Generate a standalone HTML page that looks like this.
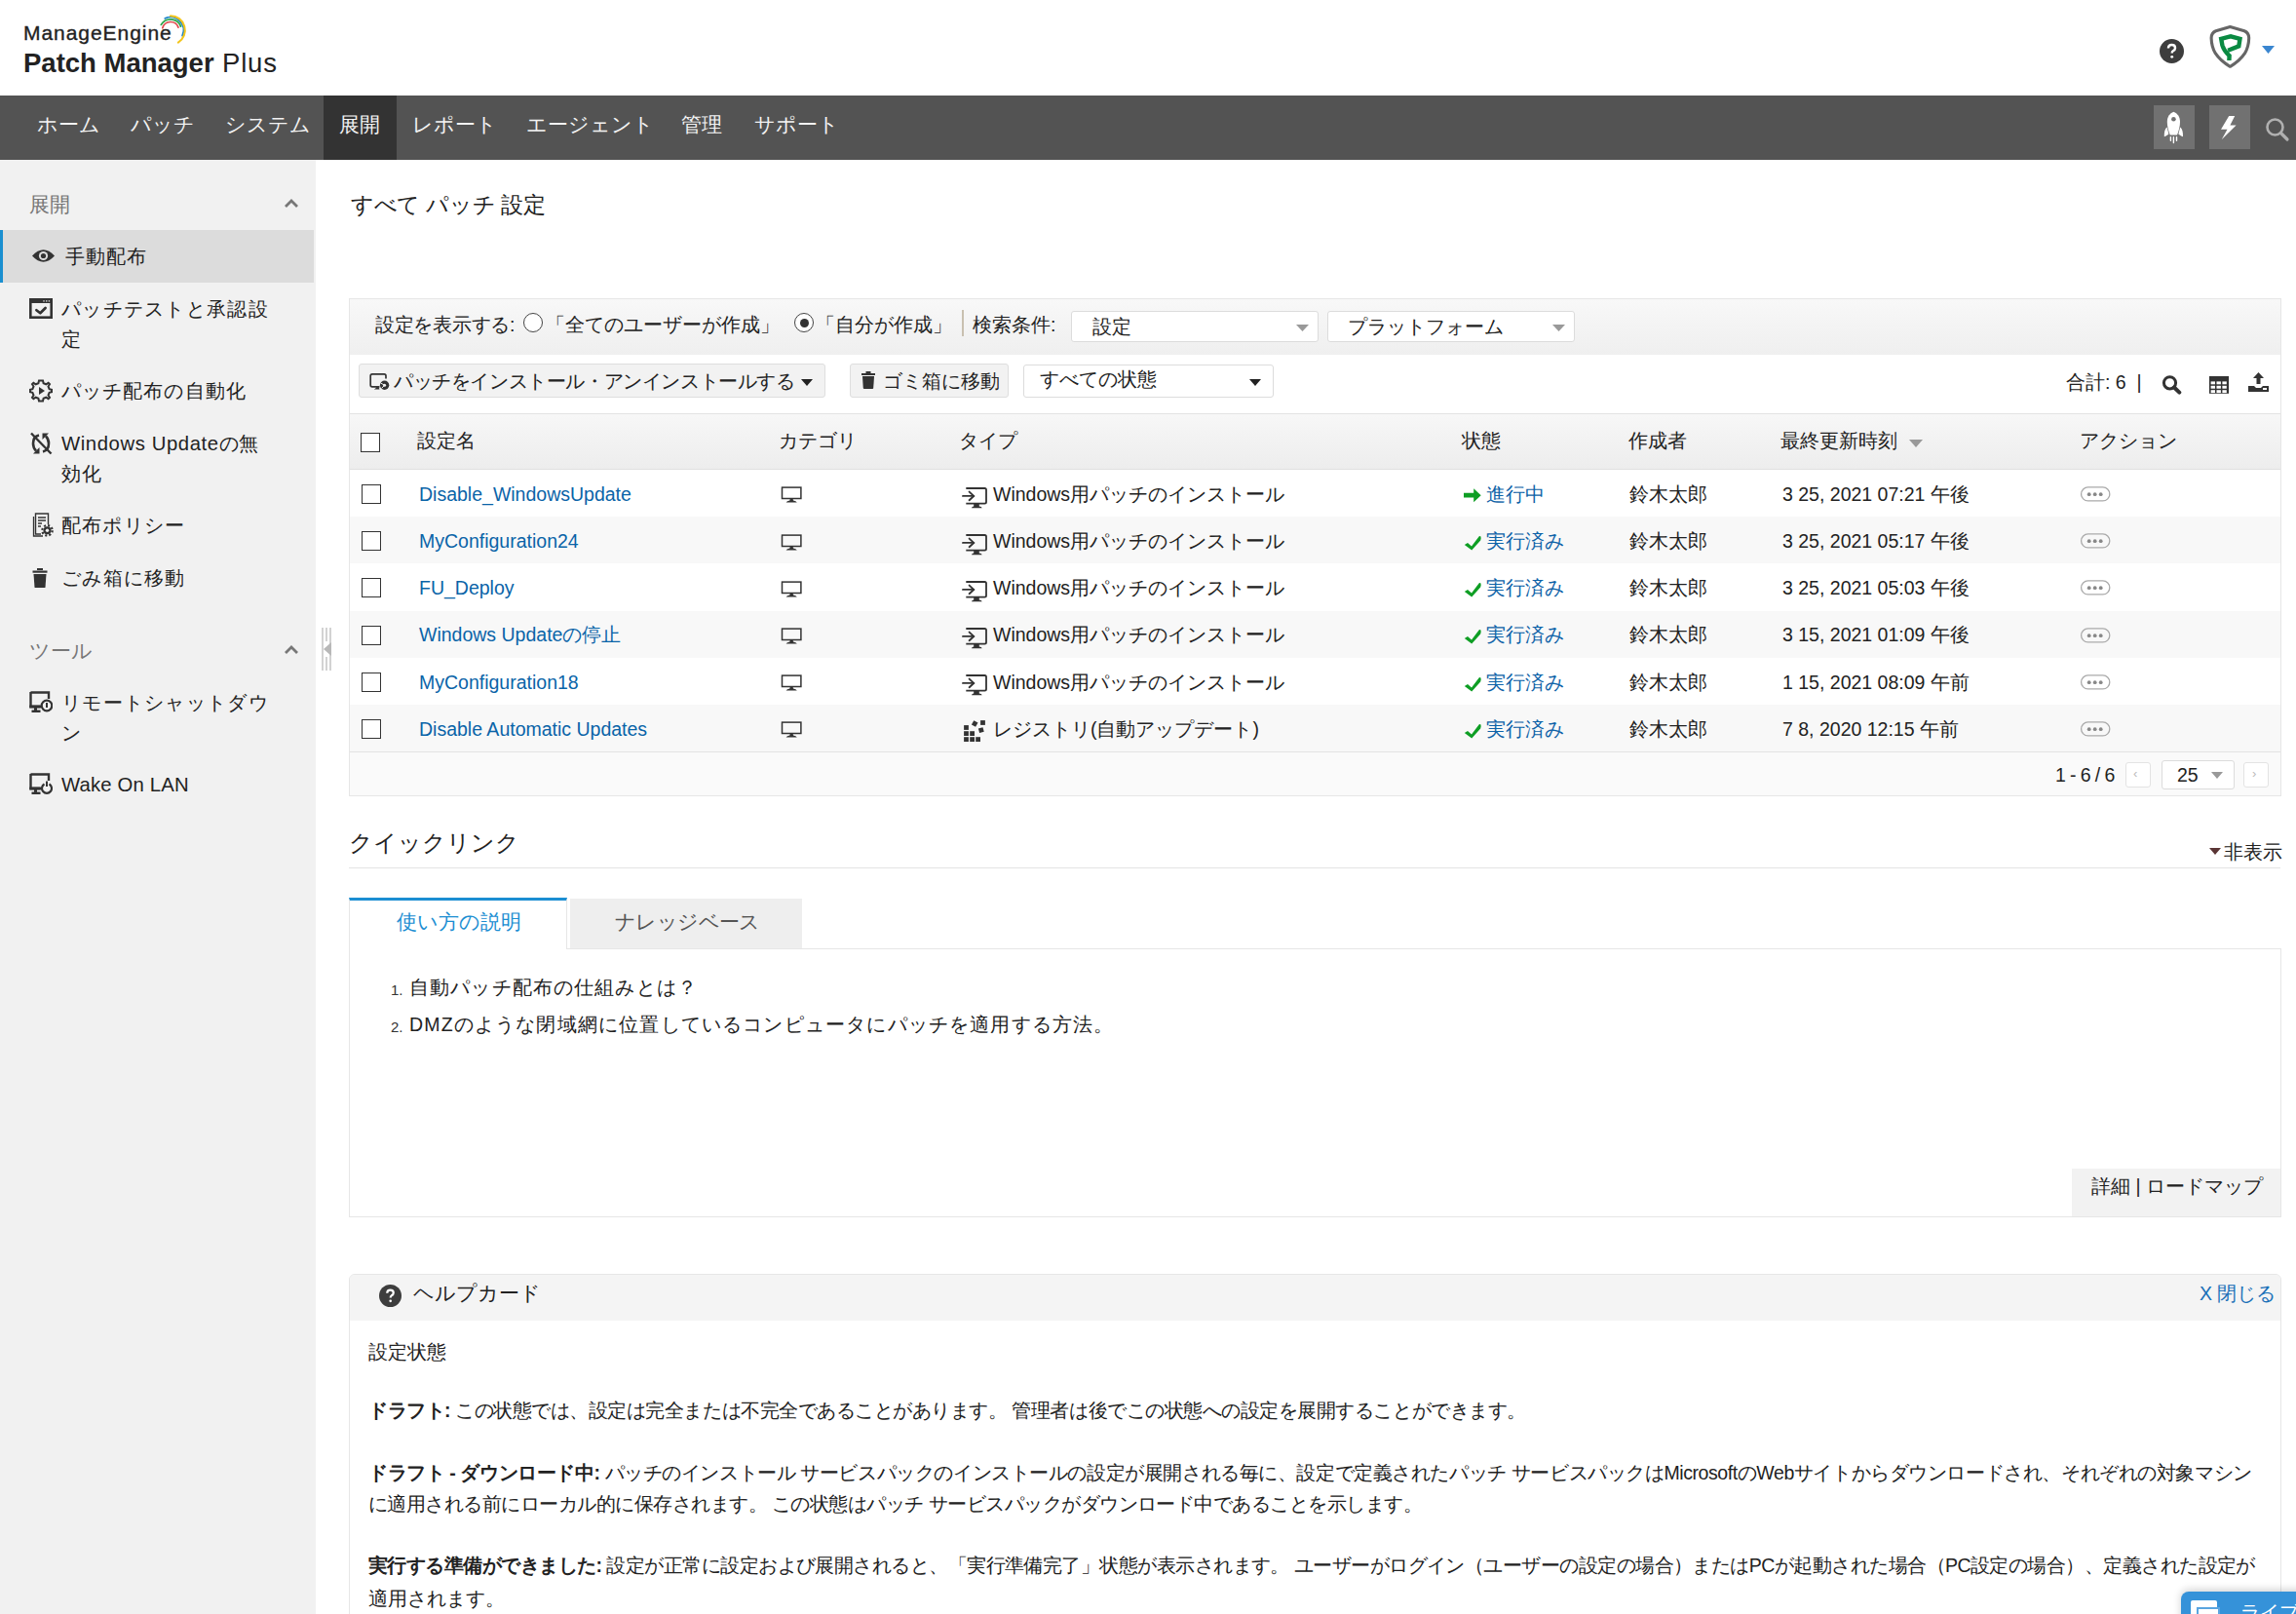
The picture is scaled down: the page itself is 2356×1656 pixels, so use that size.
<!DOCTYPE html>
<html lang="ja">
<head>
<meta charset="utf-8">
<style>
*{margin:0;padding:0;box-sizing:border-box}
html,body{width:2356px;height:1656px;overflow:hidden;background:#fff}
body{font-family:"Liberation Sans",sans-serif;color:#222;font-size:19.5px;position:relative}
.a{position:absolute}
.t{position:absolute;white-space:nowrap;line-height:1}
/* header */
#hdr{left:0;top:0;width:2356px;height:98px;background:#fff}
#nav{left:0;top:98px;width:2356px;height:66px;background:#535353}
#navact{left:332px;top:98px;width:75px;height:66px;background:#333}
.nv{color:#f2f2f2;font-size:21px}
/* sidebar */
#side{left:0;top:164px;width:324px;height:1492px;background:#f1f1f1}
#sideact{left:0;top:236px;width:322px;height:54px;background:#dcdcdc;border-left:3px solid #1a8fd0}
.sh{color:#777;font-size:21px}
.si{color:#222;font-size:20.3px}
/* panel */
#panel{left:358px;top:306px;width:1983px;height:511px;border:1px solid #e6e6e6;background:#fff}
#fbar{left:359px;top:307px;width:1981px;height:57px;background:linear-gradient(#f8f8f8,#efefef)}
.sel{position:absolute;background:#fff;border:1px solid #dcdcdc;border-radius:3px}
.btn{position:absolute;background:#f2f2f2;border:1px solid #dedede;border-radius:3px}
#thead{left:359px;top:424px;width:1981px;height:58px;background:linear-gradient(#f7f7f7,#ededed);border-top:1px solid #e3e3e3;border-bottom:1px solid #e0e0e0}
.row{position:absolute;left:359px;width:1981px;height:48.2px}
.alt{background:#f8f8f8}
#tfoot{left:359px;top:771px;width:1981px;height:45px;background:#fafafa;border-top:1px solid #e3e3e3}
.cb{position:absolute;width:20px;height:20px;border:1.5px solid #333;background:#fff}
.lnk{color:#0a64a8}
.st{color:#0f63a8}
.pill{position:absolute;width:30px;height:15px;border:1.5px solid #888;border-radius:8px}
</style>
</head>
<body>
<div id="hdr" class="a"></div>
<div id="nav" class="a"></div>
<div id="navact" class="a"></div>
<div id="side" class="a"></div>
<div id="sideact" class="a"></div>
<div id="panel" class="a"></div>
<div id="fbar" class="a"></div>
<div id="thead" class="a"></div>
<div class="row alt" style="top:530.2px"></div>
<div class="row alt" style="top:626.6px"></div>
<div class="row alt" style="top:723px"></div>
<div id="tfoot" class="a"></div>

<!-- LOGO -->
<div class="t" style="left:24px;top:23px;font-size:21px;color:#222;letter-spacing:0.95px;-webkit-text-stroke:0.35px #222">ManageEngine</div>
<svg class="a" style="left:150px;top:10px" width="50" height="40" viewBox="0 0 50 40"><path d="M16.79 18.80 A8.5 8.5 0 0 1 32.99 18.09" fill="none" stroke="#e0474c" stroke-width="1.7" stroke-linecap="round"/><path d="M15.30 15.40 A11.2 11.2 0 0 1 35.52 17.17" fill="none" stroke="#2ea54a" stroke-width="1.8" stroke-linecap="round"/><path d="M19.34 8.86 A13.4 13.4 0 0 1 37.14 26.66" fill="none" stroke="#1f86c8" stroke-width="1.9" stroke-linecap="round"/><path d="M25.00 6.20 A14.8 14.8 0 0 1 32.84 33.55" fill="none" stroke="#f3c51c" stroke-width="2.1" stroke-linecap="round"/></svg>
<div class="t" style="left:24px;top:51px;font-size:27.5px;color:#222;letter-spacing:0.8px"><span style="font-weight:bold;letter-spacing:0px">Patch Manager</span> Plus</div>
<!-- header right icons -->
<svg class="a" style="left:2216px;top:40px" width="25" height="25" viewBox="0 0 24 24">
<circle cx="12" cy="12" r="12" fill="#3d3d3d"/>
<path d="M8.6 9.2 Q8.6 5.8 12 5.8 Q15.4 5.8 15.4 8.8 Q15.4 10.6 13.3 11.8 Q12.2 12.5 12.2 14" fill="none" stroke="#fff" stroke-width="2.3"/>
<circle cx="12.2" cy="17.6" r="1.4" fill="#fff"/>
</svg>
<svg class="a" style="left:2262px;top:20px" width="54" height="56" viewBox="0 0 54 56">
<path d="M26.4 7.5 L11.8 11.8 Q7.2 13.6 7.1 19 Q7.3 28 11.3 34.7 Q16.5 42.6 26.4 48.3 Q36.3 42.6 41.5 34.7 Q45.5 28 45.7 19 Q45.6 13.6 41 11.8 Z" fill="#fff" stroke="#666" stroke-width="3.1" stroke-linejoin="round"/>
<path d="M25.4 42 L25.6 37.2 Q20 32 18.4 26.5 L17.2 19.9 L27 17.3 L36.5 19.9 L35.3 27.4 L24.2 31.8" fill="none" stroke="#0a8a42" stroke-width="4.4" stroke-linejoin="miter"/>
</svg>
<svg class="a" style="left:2321px;top:47px" width="13" height="8" viewBox="0 0 13 8"><path d="M0 0 H13 L6.5 8 Z" fill="#3a86d0"/></svg>

<!-- NAV -->
<div class="t nv" style="left:38px;top:117px">ホーム</div>
<div class="t nv" style="left:134px;top:117px">パッチ</div>
<div class="t nv" style="left:231px;top:117px">システム</div>
<div class="t nv" style="left:348px;top:117px">展開</div>
<div class="t nv" style="left:423px;top:117px">レポート</div>
<div class="t nv" style="left:540px;top:117px">エージェント</div>
<div class="t nv" style="left:699px;top:117px">管理</div>
<div class="t nv" style="left:774px;top:117px">サポート</div>
<div class="a" style="left:2210px;top:108px;width:42px;height:45px;background:#717171"></div>
<div class="a" style="left:2267px;top:108px;width:42px;height:45px;background:#717171"></div>
<svg class="a" style="left:2218px;top:112px" width="26" height="36" viewBox="0 0 26 36">
<path d="M12.4 2.8 C16.5 4.5 19 8 19 13 C19 18 17.5 23 16 26.5 L8.8 26.5 C7.3 23 5.8 18 5.8 13 C5.8 8 8.3 4.5 12.4 2.8 Z" fill="#fff"/>
<circle cx="12.4" cy="10.2" r="2.3" fill="#717171"/>
<path d="M5.6 18.5 C3.5 20 2.6 23.5 2.8 28.2 C4.5 27.8 6.3 26.5 7.4 25.5 Z M19.2 18.5 C21.3 20 22.2 23.5 22 28.2 C20.3 27.8 18.5 26.5 17.4 25.5 Z" fill="#fff"/>
<path d="M12.4 28.6 V34.6 M9.4 28.6 V32.3 M15.5 28.6 V32.3" stroke="#fff" stroke-width="1.4" stroke-linecap="round"/>
</svg>
<svg class="a" style="left:2277px;top:118px" width="22" height="26" viewBox="0 0 22 26"><path d="M10.2 1.1 H16.2 L11.4 10.4 H17.6 L2.7 25.3 L8.5 14.7 H2 Z" fill="#fff"/></svg>
<svg class="a" style="left:2324px;top:120px" width="26" height="26" viewBox="0 0 26 26">
<circle cx="10.5" cy="10.5" r="8" fill="none" stroke="#b0b0b0" stroke-width="2.6"/>
<path d="M16.5 16.5 L23 23" stroke="#b0b0b0" stroke-width="3.2" stroke-linecap="round"/>
</svg>


<!-- SIDEBAR -->
<div class="t sh" style="left:30px;top:199px">展開</div>
<svg class="a" style="left:291px;top:203px" width="16" height="11" viewBox="0 0 16 11"><path d="M2 9 L8 3 L14 9" fill="none" stroke="#777" stroke-width="2.8"/></svg>

<svg class="a" style="left:32px;top:254px" width="25" height="17" viewBox="0 0 25 17">
<path d="M1 8.5 Q12.5 -4 24 8.5 Q12.5 21 1 8.5 Z" fill="#333"/>
<circle cx="12.5" cy="8.5" r="4.6" fill="#dcdcdc"/><circle cx="12.5" cy="8.5" r="2.6" fill="#333"/>
</svg>
<div class="t si" style="left:67px;top:253px;letter-spacing:1.0px">手動配布</div>

<svg class="a" style="left:30px;top:306px" width="24" height="21" viewBox="0 0 24 21">
<rect x="1.3" y="1.3" width="21.4" height="18.4" fill="none" stroke="#333" stroke-width="2.6"/>
<rect x="0" y="0" width="24" height="5" fill="#333"/>
<rect x="14.3" y="2.3" width="1.4" height="1.2" fill="#f1f1f1"/><rect x="17" y="2.3" width="1.4" height="1.2" fill="#f1f1f1"/><rect x="19.7" y="2.3" width="1.4" height="1.2" fill="#f1f1f1"/>
<path d="M7.4 12.2 L11.3 15.3 L16.6 10" fill="none" stroke="#333" stroke-width="2.7" stroke-linecap="round" stroke-linejoin="round"/>
</svg>
<div class="t si" style="left:63px;top:307px;letter-spacing:1.3px">パッチテストと承認設</div>
<div class="t si" style="left:63px;top:338px;letter-spacing:1.3px">定</div>

<svg class="a" style="left:30px;top:389px" width="24" height="24" viewBox="0 0 24 24">
<path d="M12 1.5 L14 1.5 L14.6 4.2 L17.3 5.3 L19.6 3.8 L21 5.2 L19.5 7.5 L20.6 10.2 L23 10.8 L23 13.2 L20.6 13.8 L19.5 16.5 L21 18.8 L19.6 20.2 L17.3 18.7 L14.6 19.8 L14 22.5 L10 22.5 L9.4 19.8 L6.7 18.7 L4.4 20.2 L3 18.8 L4.5 16.5 L3.4 13.8 L1 13.2 L1 10.8 L3.4 10.2 L4.5 7.5 L3 5.2 L4.4 3.8 L6.7 5.3 L9.4 4.2 L10 1.5 Z" fill="none" stroke="#333" stroke-width="2"/>
<path d="M10 8 L16 12 L10 16 Z" fill="#333"/>
</svg>
<div class="t si" style="left:63px;top:391px;letter-spacing:1.1px">パッチ配布の自動化</div>

<svg class="a" style="left:30px;top:443px" width="24" height="24" viewBox="0 0 24 24">
<path d="M10 3.5 Q4 5 4 12 Q4 16.5 7 19.5" fill="none" stroke="#333" stroke-width="2.6"/>
<path d="M4 22.5 L10.5 22.5 L10.5 16 Z" fill="#333"/>
<path d="M14 20.5 Q20 19 20 12 Q20 7.5 17 4.5" fill="none" stroke="#333" stroke-width="2.6"/>
<path d="M20 1.5 L13.5 1.5 L13.5 8 Z" fill="#333"/>
<path d="M2 1.5 L22.5 22.5" stroke="#333" stroke-width="2.4"/>
</svg>
<div class="t si" style="left:63px;top:445px;letter-spacing:0.6px">Windows Updateの無</div>
<div class="t si" style="left:63px;top:476px;letter-spacing:1.3px">効化</div>

<svg class="a" style="left:31px;top:526px" width="24" height="25" viewBox="0 0 24 25">
<path d="M3.5 4 V24 H13" fill="none" stroke="#333" stroke-width="1.3"/>
<path d="M11 22 H5.5 V1 H18.5 V12" fill="#f1f1f1" stroke="#333" stroke-width="1.4"/>
<path d="M8 5 H16 M8 8 H16" stroke="#333" stroke-width="1.6"/>
<path d="M8 11 H12 M8 14 H11" stroke="#333" stroke-width="1.4"/>
<circle cx="17.5" cy="18.3" r="4" fill="#333"/>
<circle cx="17.5" cy="18.3" r="5.2" fill="none" stroke="#333" stroke-width="2.2" stroke-dasharray="2.04 2.04"/>
<circle cx="17.5" cy="18.3" r="1.7" fill="#f1f1f1"/>
</svg>
<div class="t si" style="left:63px;top:529px;letter-spacing:1.2px">配布ポリシー</div>

<svg class="a" style="left:33px;top:583px" width="16" height="20" viewBox="0 0 16 20">
<rect x="0.5" y="2.5" width="15" height="2.2" fill="#333"/>
<rect x="5" y="0" width="6" height="2" fill="#333"/>
<path d="M1.5 6 H14.5 L13.5 19.5 Q13.4 20 12.8 20 H3.2 Q2.6 20 2.5 19.5 Z" fill="#333"/>
</svg>
<div class="t si" style="left:63px;top:583px;letter-spacing:1.3px">ごみ箱に移動</div>

<div class="t sh" style="left:30px;top:657px">ツール</div>
<svg class="a" style="left:291px;top:661px" width="16" height="11" viewBox="0 0 16 11"><path d="M2 9 L8 3 L14 9" fill="none" stroke="#777" stroke-width="2.8"/></svg>

<svg class="a" style="left:329px;top:644px" width="14" height="44" viewBox="0 0 14 44">
<path d="M2 0 V44 M6 0 V14 M6 30 V44 M10 0 V44" stroke="#c8c8c8" stroke-width="1.6"/>
<path d="M11 15 L3 22 L11 29 Z" fill="#b8b8b8"/>
</svg>

<svg class="a" style="left:30px;top:709px" width="24" height="23" viewBox="0 0 24 23">
<path d="M1.5 1.5 H20 V8" fill="none" stroke="#333" stroke-width="2.4"/>
<path d="M1.5 1 V16 H11" fill="none" stroke="#333" stroke-width="2.4"/>
<rect x="0.3" y="14.5" width="12" height="3" fill="#333"/>
<rect x="5" y="17" width="3" height="3" fill="#333"/><rect x="2.5" y="19.5" width="9" height="2.5" fill="#333"/>
<circle cx="18" cy="15" r="5.3" fill="none" stroke="#333" stroke-width="2.2"/>
<path d="M18 12 V17" stroke="#333" stroke-width="2"/>
</svg>
<div class="t si" style="left:63px;top:711px;letter-spacing:1.3px">リモートシャットダウ</div>
<div class="t si" style="left:63px;top:742px;letter-spacing:1.3px">ン</div>

<svg class="a" style="left:30px;top:793px" width="24" height="23" viewBox="0 0 24 23">
<path d="M1.5 1.5 H20 V8" fill="none" stroke="#333" stroke-width="2.4"/>
<path d="M1.5 1 V16 H11" fill="none" stroke="#333" stroke-width="2.4"/>
<rect x="0.3" y="14.5" width="12" height="3" fill="#333"/>
<rect x="5" y="17" width="3" height="3" fill="#333"/><rect x="2.5" y="19.5" width="9" height="2.5" fill="#333"/>
<path d="M15.5 11.5 A5 5 0 1 0 20.5 11.5" fill="none" stroke="#333" stroke-width="2.2"/>
<path d="M18 8.5 V14" stroke="#333" stroke-width="2"/>
</svg>
<div class="t si" style="left:63px;top:795px;letter-spacing:0.17px">Wake On LAN</div>


<!-- MAIN TITLE -->
<div class="t" style="left:360px;top:200px;font-size:22.5px;color:#222;letter-spacing:-0.28px">すべて パッチ 設定</div>

<!-- FILTER BAR -->
<div class="t" style="left:385px;top:324px;font-size:19.5px;letter-spacing:-0.29px">設定を表示する:</div>
<div class="a" style="left:537px;top:321px;width:20px;height:20px;border:1.3px solid #444;border-radius:50%;background:#fff"></div>
<div class="t" style="left:560px;top:324px;font-size:19.5px">「全てのユーザーが作成」</div>
<div class="a" style="left:815px;top:321px;width:20px;height:20px;border:1.3px solid #444;border-radius:50%;background:#fff"></div>
<div class="a" style="left:820.5px;top:326.5px;width:9px;height:9px;border-radius:50%;background:#333"></div>
<div class="t" style="left:837px;top:324px;font-size:19.5px">「自分が作成」</div>
<div class="a" style="left:987px;top:318px;width:1.5px;height:27px;background:#c9c0b0"></div>
<div class="t" style="left:998px;top:324px;font-size:19.5px">検索条件:</div>
<div class="sel" style="left:1099px;top:319px;width:254px;height:32px"></div>
<div class="t" style="left:1121px;top:326px;font-size:19.5px">設定</div>
<svg class="a" style="left:1330px;top:333px" width="13" height="7" viewBox="0 0 13 7"><path d="M0 0 H13 L6.5 7 Z" fill="#999"/></svg>
<div class="sel" style="left:1362px;top:319px;width:254px;height:32px"></div>
<div class="t" style="left:1383px;top:326px;font-size:19.5px">プラットフォーム</div>
<svg class="a" style="left:1593px;top:333px" width="13" height="7" viewBox="0 0 13 7"><path d="M0 0 H13 L6.5 7 Z" fill="#999"/></svg>

<!-- TOOLBAR -->
<div class="btn" style="left:368px;top:373px;width:479px;height:35px"></div>
<svg class="a" style="left:379px;top:383px" width="22" height="18" viewBox="0 0 22 18">
<path d="M10.5 13.8 H3 Q1.2 13.8 1.2 12 V2.7 Q1.2 0.9 3 0.9 H15.2 Q17 0.9 17 2.7 V5.5" fill="none" stroke="#333" stroke-width="1.7"/>
<path d="M4.8 16.6 Q6.5 15.5 7.5 14 H9.6 L10.5 16.6 Z" fill="#333"/>
<circle cx="15.6" cy="12.2" r="4.7" fill="#333"/>
<circle cx="15.6" cy="12.2" r="1.5" fill="#f2f2f2"/>
<path d="M11.5 10 L15.6 12.2 L12.5 15.5" fill="none" stroke="#f2f2f2" stroke-width="1"/>
</svg>
<div class="t" style="left:404px;top:382px;font-size:19.5px;letter-spacing:-0.4px">パッチをインストール・アンインストールする</div>
<svg class="a" style="left:822px;top:389px" width="12" height="7" viewBox="0 0 12 7"><path d="M0 0 H12 L6 7 Z" fill="#222"/></svg>

<div class="btn" style="left:872px;top:373px;width:163px;height:35px"></div>
<svg class="a" style="left:884px;top:381px" width="14" height="18" viewBox="0 0 14 18">
<rect x="0" y="2" width="14" height="2" fill="#333"/><rect x="4.5" y="0" width="5" height="2" fill="#333"/>
<path d="M1 5 H13 L12.2 17.3 Q12 18 11.3 18 H2.7 Q2 18 1.8 17.3 Z" fill="#333"/>
</svg>
<div class="t" style="left:906px;top:382px;font-size:19.5px">ゴミ箱に移動</div>

<div class="sel" style="left:1050px;top:374px;width:257px;height:34px"></div>
<div class="t" style="left:1067px;top:380px;font-size:19.5px">すべての状態</div>
<svg class="a" style="left:1282px;top:389px" width="12" height="7" viewBox="0 0 12 7"><path d="M0 0 H12 L6 7 Z" fill="#222"/></svg>

<div class="t" style="left:2120px;top:383px;font-size:19.5px">合計: 6 &nbsp;|</div>
<svg class="a" style="left:2218px;top:385px" width="21" height="21" viewBox="0 0 21 21">
<circle cx="8.5" cy="7.8" r="6.1" fill="none" stroke="#333" stroke-width="3"/>
<path d="M13 12.5 L18.3 17.6" stroke="#333" stroke-width="4" stroke-linecap="round"/>
</svg>
<svg class="a" style="left:2267px;top:386px" width="20" height="18" viewBox="0 0 20 18"><rect x="0" y="0" width="20" height="17.8" fill="#333"/><rect x="1.60" y="5.40" width="4.4" height="2.9" fill="#fff"/><rect x="7.50" y="5.40" width="4.4" height="2.9" fill="#fff"/><rect x="13.40" y="5.40" width="4.4" height="2.9" fill="#fff"/><rect x="1.60" y="9.80" width="4.4" height="2.9" fill="#fff"/><rect x="7.50" y="9.80" width="4.4" height="2.9" fill="#fff"/><rect x="13.40" y="9.80" width="4.4" height="2.9" fill="#fff"/><rect x="1.60" y="14.20" width="4.4" height="2.9" fill="#fff"/><rect x="7.50" y="14.20" width="4.4" height="2.9" fill="#fff"/><rect x="13.40" y="14.20" width="4.4" height="2.9" fill="#fff"/></svg>
<svg class="a" style="left:2307px;top:382px" width="21" height="21" viewBox="0 0 21 21">
<path d="M10.5 0 L16 6 H12.5 V12 H8.5 V6 H5 Z" fill="#333"/>
<path d="M0 14 H6 L8 16 H13 L15 14 H21 V20 H0 Z" fill="#333"/>
<rect x="15" y="16" width="4" height="2" fill="#fff"/>
</svg>

<!-- TABLE HEADER -->
<div class="cb" style="left:370px;top:444px"></div>
<div class="t" style="left:428px;top:443px;font-size:19.5px">設定名</div>
<div class="t" style="left:799px;top:443px;font-size:19.5px">カテゴリ</div>
<div class="t" style="left:984px;top:443px;font-size:19.5px">タイプ</div>
<div class="t" style="left:1500px;top:443px;font-size:19.5px">状態</div>
<div class="t" style="left:1671px;top:443px;font-size:19.5px">作成者</div>
<div class="t" style="left:1827px;top:443px;font-size:19.5px">最終更新時刻</div>
<svg class="a" style="left:1959px;top:451px" width="14" height="8" viewBox="0 0 14 8"><path d="M0 0 H14 L7 8 Z" fill="#999"/></svg>
<div class="t" style="left:2134px;top:443px;font-size:19.5px">アクション</div>

<!-- ROWS -->
<div class="cb" style="left:371px;top:497.1px"></div>
<div class="t lnk" style="left:430px;top:497.8px;font-size:19.5px">Disable_WindowsUpdate</div>
<svg class="a" style="left:801px;top:499.3px" width="22" height="17" viewBox="0 0 22 17"><rect x="1.5" y="1.1" width="19.4" height="11.4" fill="none" stroke="#333" stroke-width="1.5"/><path d="M9.8 12.5 H12.6 L13 14.6 Q16 15 16.8 16.4 H5.6 Q6.4 15 9.4 14.6 Z" fill="#333"/></svg>
<svg class="a" style="left:987px;top:499.5px" width="26" height="22" viewBox="0 0 26 22"><path d="M4.3 1 H23.4 Q25 1 25 2.6 V15 Q25 16.6 23.4 16.6 H4.3" fill="none" stroke="#333" stroke-width="1.8"/><path d="M12.2 17 H17.8 V19.6 Q20.5 20 20.7 21.2 H10 Q10.2 20 12.2 19.6 Z" fill="#333"/><path d="M1 8.9 H12" stroke="#333" stroke-width="1.9" stroke-linecap="round"/><path d="M7.6 4.6 L12.2 8.9 L7.6 13.2" fill="none" stroke="#333" stroke-width="1.9" stroke-linecap="round"/></svg>
<div class="t" style="left:1019px;top:497.8px;font-size:19.5px">Windows用パッチのインストール</div>
<svg class="a" style="left:1502px;top:501.0px" width="18" height="15" viewBox="0 0 18 15"><path d="M0 4.8 H10.2 V0.2 L17.7 7.2 L10.2 14.2 V9.6 H0 Z" fill="#0e9e24"/></svg>
<div class="t st" style="left:1525px;top:497.8px;font-size:19.5px">進行中</div>
<div class="t" style="left:1672px;top:497.8px;font-size:19.5px">鈴木太郎</div>
<div class="t" style="left:1829px;top:497.8px;font-size:19.5px">3 25, 2021 07:21 午後</div>
<svg class="a" style="left:2134px;top:499.1px" width="32" height="16" viewBox="0 0 32 16"><rect x="1.6" y="0.9" width="29.2" height="14" rx="7" fill="none" stroke="#aaa" stroke-width="1.3"/><circle cx="9.7" cy="8.2" r="1.9" fill="#888"/><circle cx="15.7" cy="8.2" r="1.9" fill="#888"/><circle cx="21.7" cy="8.2" r="1.9" fill="#888"/></svg>
<div class="cb" style="left:371px;top:545.3px"></div>
<div class="t lnk" style="left:430px;top:546.0px;font-size:19.5px">MyConfiguration24</div>
<svg class="a" style="left:801px;top:547.5px" width="22" height="17" viewBox="0 0 22 17"><rect x="1.5" y="1.1" width="19.4" height="11.4" fill="none" stroke="#333" stroke-width="1.5"/><path d="M9.8 12.5 H12.6 L13 14.6 Q16 15 16.8 16.4 H5.6 Q6.4 15 9.4 14.6 Z" fill="#333"/></svg>
<svg class="a" style="left:987px;top:547.7px" width="26" height="22" viewBox="0 0 26 22"><path d="M4.3 1 H23.4 Q25 1 25 2.6 V15 Q25 16.6 23.4 16.6 H4.3" fill="none" stroke="#333" stroke-width="1.8"/><path d="M12.2 17 H17.8 V19.6 Q20.5 20 20.7 21.2 H10 Q10.2 20 12.2 19.6 Z" fill="#333"/><path d="M1 8.9 H12" stroke="#333" stroke-width="1.9" stroke-linecap="round"/><path d="M7.6 4.6 L12.2 8.9 L7.6 13.2" fill="none" stroke="#333" stroke-width="1.9" stroke-linecap="round"/></svg>
<div class="t" style="left:1019px;top:546.0px;font-size:19.5px">Windows用パッチのインストール</div>
<svg class="a" style="left:1502px;top:549.0px" width="18" height="16" viewBox="0 0 18 16"><path d="M0.8 10 L4 8 L8 11.4 L15.8 1.2 Q17.8 0.4 17.7 3.2 L17.2 5.6 L8.2 15.4 Z" fill="#0e9e24"/></svg>
<div class="t st" style="left:1525px;top:546.0px;font-size:19.5px">実行済み</div>
<div class="t" style="left:1672px;top:546.0px;font-size:19.5px">鈴木太郎</div>
<div class="t" style="left:1829px;top:546.0px;font-size:19.5px">3 25, 2021 05:17 午後</div>
<svg class="a" style="left:2134px;top:547.3px" width="32" height="16" viewBox="0 0 32 16"><rect x="1.6" y="0.9" width="29.2" height="14" rx="7" fill="none" stroke="#aaa" stroke-width="1.3"/><circle cx="9.7" cy="8.2" r="1.9" fill="#888"/><circle cx="15.7" cy="8.2" r="1.9" fill="#888"/><circle cx="21.7" cy="8.2" r="1.9" fill="#888"/></svg>
<div class="cb" style="left:371px;top:593.4px"></div>
<div class="t lnk" style="left:430px;top:594.1px;font-size:19.5px">FU_Deploy</div>
<svg class="a" style="left:801px;top:595.6px" width="22" height="17" viewBox="0 0 22 17"><rect x="1.5" y="1.1" width="19.4" height="11.4" fill="none" stroke="#333" stroke-width="1.5"/><path d="M9.8 12.5 H12.6 L13 14.6 Q16 15 16.8 16.4 H5.6 Q6.4 15 9.4 14.6 Z" fill="#333"/></svg>
<svg class="a" style="left:987px;top:595.8px" width="26" height="22" viewBox="0 0 26 22"><path d="M4.3 1 H23.4 Q25 1 25 2.6 V15 Q25 16.6 23.4 16.6 H4.3" fill="none" stroke="#333" stroke-width="1.8"/><path d="M12.2 17 H17.8 V19.6 Q20.5 20 20.7 21.2 H10 Q10.2 20 12.2 19.6 Z" fill="#333"/><path d="M1 8.9 H12" stroke="#333" stroke-width="1.9" stroke-linecap="round"/><path d="M7.6 4.6 L12.2 8.9 L7.6 13.2" fill="none" stroke="#333" stroke-width="1.9" stroke-linecap="round"/></svg>
<div class="t" style="left:1019px;top:594.1px;font-size:19.5px">Windows用パッチのインストール</div>
<svg class="a" style="left:1502px;top:597.1px" width="18" height="16" viewBox="0 0 18 16"><path d="M0.8 10 L4 8 L8 11.4 L15.8 1.2 Q17.8 0.4 17.7 3.2 L17.2 5.6 L8.2 15.4 Z" fill="#0e9e24"/></svg>
<div class="t st" style="left:1525px;top:594.1px;font-size:19.5px">実行済み</div>
<div class="t" style="left:1672px;top:594.1px;font-size:19.5px">鈴木太郎</div>
<div class="t" style="left:1829px;top:594.1px;font-size:19.5px">3 25, 2021 05:03 午後</div>
<svg class="a" style="left:2134px;top:595.4px" width="32" height="16" viewBox="0 0 32 16"><rect x="1.6" y="0.9" width="29.2" height="14" rx="7" fill="none" stroke="#aaa" stroke-width="1.3"/><circle cx="9.7" cy="8.2" r="1.9" fill="#888"/><circle cx="15.7" cy="8.2" r="1.9" fill="#888"/><circle cx="21.7" cy="8.2" r="1.9" fill="#888"/></svg>
<div class="cb" style="left:371px;top:641.6px"></div>
<div class="t lnk" style="left:430px;top:642.3px;font-size:19.5px">Windows Updateの停止</div>
<svg class="a" style="left:801px;top:643.8px" width="22" height="17" viewBox="0 0 22 17"><rect x="1.5" y="1.1" width="19.4" height="11.4" fill="none" stroke="#333" stroke-width="1.5"/><path d="M9.8 12.5 H12.6 L13 14.6 Q16 15 16.8 16.4 H5.6 Q6.4 15 9.4 14.6 Z" fill="#333"/></svg>
<svg class="a" style="left:987px;top:644.0px" width="26" height="22" viewBox="0 0 26 22"><path d="M4.3 1 H23.4 Q25 1 25 2.6 V15 Q25 16.6 23.4 16.6 H4.3" fill="none" stroke="#333" stroke-width="1.8"/><path d="M12.2 17 H17.8 V19.6 Q20.5 20 20.7 21.2 H10 Q10.2 20 12.2 19.6 Z" fill="#333"/><path d="M1 8.9 H12" stroke="#333" stroke-width="1.9" stroke-linecap="round"/><path d="M7.6 4.6 L12.2 8.9 L7.6 13.2" fill="none" stroke="#333" stroke-width="1.9" stroke-linecap="round"/></svg>
<div class="t" style="left:1019px;top:642.3px;font-size:19.5px">Windows用パッチのインストール</div>
<svg class="a" style="left:1502px;top:645.3px" width="18" height="16" viewBox="0 0 18 16"><path d="M0.8 10 L4 8 L8 11.4 L15.8 1.2 Q17.8 0.4 17.7 3.2 L17.2 5.6 L8.2 15.4 Z" fill="#0e9e24"/></svg>
<div class="t st" style="left:1525px;top:642.3px;font-size:19.5px">実行済み</div>
<div class="t" style="left:1672px;top:642.3px;font-size:19.5px">鈴木太郎</div>
<div class="t" style="left:1829px;top:642.3px;font-size:19.5px">3 15, 2021 01:09 午後</div>
<svg class="a" style="left:2134px;top:643.6px" width="32" height="16" viewBox="0 0 32 16"><rect x="1.6" y="0.9" width="29.2" height="14" rx="7" fill="none" stroke="#aaa" stroke-width="1.3"/><circle cx="9.7" cy="8.2" r="1.9" fill="#888"/><circle cx="15.7" cy="8.2" r="1.9" fill="#888"/><circle cx="21.7" cy="8.2" r="1.9" fill="#888"/></svg>
<div class="cb" style="left:371px;top:689.8px"></div>
<div class="t lnk" style="left:430px;top:690.5px;font-size:19.5px">MyConfiguration18</div>
<svg class="a" style="left:801px;top:692.0px" width="22" height="17" viewBox="0 0 22 17"><rect x="1.5" y="1.1" width="19.4" height="11.4" fill="none" stroke="#333" stroke-width="1.5"/><path d="M9.8 12.5 H12.6 L13 14.6 Q16 15 16.8 16.4 H5.6 Q6.4 15 9.4 14.6 Z" fill="#333"/></svg>
<svg class="a" style="left:987px;top:692.2px" width="26" height="22" viewBox="0 0 26 22"><path d="M4.3 1 H23.4 Q25 1 25 2.6 V15 Q25 16.6 23.4 16.6 H4.3" fill="none" stroke="#333" stroke-width="1.8"/><path d="M12.2 17 H17.8 V19.6 Q20.5 20 20.7 21.2 H10 Q10.2 20 12.2 19.6 Z" fill="#333"/><path d="M1 8.9 H12" stroke="#333" stroke-width="1.9" stroke-linecap="round"/><path d="M7.6 4.6 L12.2 8.9 L7.6 13.2" fill="none" stroke="#333" stroke-width="1.9" stroke-linecap="round"/></svg>
<div class="t" style="left:1019px;top:690.5px;font-size:19.5px">Windows用パッチのインストール</div>
<svg class="a" style="left:1502px;top:693.5px" width="18" height="16" viewBox="0 0 18 16"><path d="M0.8 10 L4 8 L8 11.4 L15.8 1.2 Q17.8 0.4 17.7 3.2 L17.2 5.6 L8.2 15.4 Z" fill="#0e9e24"/></svg>
<div class="t st" style="left:1525px;top:690.5px;font-size:19.5px">実行済み</div>
<div class="t" style="left:1672px;top:690.5px;font-size:19.5px">鈴木太郎</div>
<div class="t" style="left:1829px;top:690.5px;font-size:19.5px">1 15, 2021 08:09 午前</div>
<svg class="a" style="left:2134px;top:691.8px" width="32" height="16" viewBox="0 0 32 16"><rect x="1.6" y="0.9" width="29.2" height="14" rx="7" fill="none" stroke="#aaa" stroke-width="1.3"/><circle cx="9.7" cy="8.2" r="1.9" fill="#888"/><circle cx="15.7" cy="8.2" r="1.9" fill="#888"/><circle cx="21.7" cy="8.2" r="1.9" fill="#888"/></svg>
<div class="cb" style="left:371px;top:738.0px"></div>
<div class="t lnk" style="left:430px;top:738.7px;font-size:19.5px">Disable Automatic Updates</div>
<svg class="a" style="left:801px;top:740.2px" width="22" height="17" viewBox="0 0 22 17"><rect x="1.5" y="1.1" width="19.4" height="11.4" fill="none" stroke="#333" stroke-width="1.5"/><path d="M9.8 12.5 H12.6 L13 14.6 Q16 15 16.8 16.4 H5.6 Q6.4 15 9.4 14.6 Z" fill="#333"/></svg>
<svg class="a" style="left:988px;top:738.0px" width="24" height="24" viewBox="0 0 24 24"><g fill="#333"><rect x="1.1" y="6.1" width="4.8" height="4.8"/><rect x="1.1" y="12.2" width="4.8" height="4.8"/><rect x="7.2" y="12.2" width="4.8" height="4.8"/><rect x="1.1" y="18.2" width="4.8" height="4.8"/><rect x="7.2" y="18.2" width="4.8" height="4.8"/><rect x="13.2" y="18.2" width="4.8" height="4.8"/><rect x="18.1" y="1.1" width="4.8" height="4.8"/><rect x="9.8" y="2.1" width="4.8" height="4.8" transform="rotate(30 12.2 4.5)"/><rect x="16.4" y="8.7" width="4.8" height="4.8" transform="rotate(-15 18.8 11.1)"/></g></svg>
<div class="t" style="left:1019px;top:738.7px;font-size:19.5px">レジストリ(自動アップデート)</div>
<svg class="a" style="left:1502px;top:741.7px" width="18" height="16" viewBox="0 0 18 16"><path d="M0.8 10 L4 8 L8 11.4 L15.8 1.2 Q17.8 0.4 17.7 3.2 L17.2 5.6 L8.2 15.4 Z" fill="#0e9e24"/></svg>
<div class="t st" style="left:1525px;top:738.7px;font-size:19.5px">実行済み</div>
<div class="t" style="left:1672px;top:738.7px;font-size:19.5px">鈴木太郎</div>
<div class="t" style="left:1829px;top:738.7px;font-size:19.5px">7 8, 2020 12:15 午前</div>
<svg class="a" style="left:2134px;top:740.0px" width="32" height="16" viewBox="0 0 32 16"><rect x="1.6" y="0.9" width="29.2" height="14" rx="7" fill="none" stroke="#aaa" stroke-width="1.3"/><circle cx="9.7" cy="8.2" r="1.9" fill="#888"/><circle cx="15.7" cy="8.2" r="1.9" fill="#888"/><circle cx="21.7" cy="8.2" r="1.9" fill="#888"/></svg>
<!-- FOOTER -->
<div class="t" style="left:2109px;top:786px;font-size:19.5px;letter-spacing:-0.6px">1 - 6 / 6</div>
<div class="a" style="left:2181px;top:782px;width:26px;height:26px;border:1px solid #e3e3e3;border-radius:3px;background:#fff"></div>
<div class="t" style="left:2189px;top:787px;font-size:13px;color:#bbb">&lsaquo;</div>
<div class="a" style="left:2218px;top:780px;width:75px;height:30px;border:1px solid #dcdcdc;border-radius:3px;background:#fff"></div>
<div class="t" style="left:2234px;top:786px;font-size:19.5px">25</div>
<svg class="a" style="left:2269px;top:792px" width="12" height="7" viewBox="0 0 12 7"><path d="M0 0 H12 L6 7 Z" fill="#999"/></svg>
<div class="a" style="left:2302px;top:782px;width:26px;height:26px;border:1px solid #e3e3e3;border-radius:3px;background:#fff"></div>
<div class="t" style="left:2311px;top:787px;font-size:13px;color:#bbb">&rsaquo;</div>


<!-- QUICK LINKS -->
<div class="t" style="left:358px;top:854px;font-size:23.5px;color:#222">クイックリンク</div>
<svg class="a" style="left:2267px;top:870px" width="12" height="7" viewBox="0 0 12 7"><path d="M0 0 H12 L6 7 Z" fill="#5a3535"/></svg>
<div class="t" style="left:2282px;top:865px;font-size:19.5px;color:#222">非表示</div>
<div class="a" style="left:358px;top:890px;width:1982px;height:1px;background:#e3e3e3"></div>

<div class="a" style="left:358px;top:973px;width:1983px;height:276px;border:1px solid #e6e6e6;background:#fff"></div>
<div class="a" style="left:358px;top:921px;width:224px;height:53px;background:#fff;border-top:3px solid #1b8ed2;border-left:1px solid #e6e6e6;border-right:1px solid #e6e6e6"></div>
<div class="a" style="left:585px;top:922px;width:238px;height:51px;background:#eeeeee"></div>
<div class="t" style="left:407px;top:936px;font-size:20.5px;color:#1b8ed2">使い方の説明</div>
<div class="t" style="left:631px;top:936px;font-size:20.5px;color:#555;letter-spacing:-0.6px">ナレッジベース</div>

<div class="t" style="left:401px;top:1008px;font-size:15px;color:#333">1.</div>
<div class="t" style="left:420px;top:1004px;font-size:19.5px;color:#222;letter-spacing:1.15px">自動パッチ配布の仕組みとは？</div>
<div class="t" style="left:401px;top:1046px;font-size:15px;color:#333">2.</div>
<div class="t" style="left:420px;top:1042px;font-size:19.5px;color:#222;letter-spacing:1.18px">DMZのような閉域網に位置しているコンピュータにパッチを適用する方法。</div>

<div class="a" style="left:2126px;top:1199px;width:214px;height:49px;background:#f2f2f2"></div>
<div class="t" style="left:2146px;top:1208px;font-size:19.5px;color:#222">詳細 | ロードマップ</div>

<!-- HELP CARD -->
<div class="a" style="left:358px;top:1307px;width:1983px;height:360px;border:1px solid #e6e6e6;border-radius:6px 6px 0 0;background:#fff"></div>
<div class="a" style="left:359px;top:1308px;width:1981px;height:47px;background:#f4f4f4;border-radius:5px 5px 0 0"></div>
<svg class="a" style="left:389px;top:1318px" width="23" height="23" viewBox="0 0 24 24">
<circle cx="12" cy="12" r="12" fill="#3d3d3d"/>
<path d="M8.6 9.2 Q8.6 5.8 12 5.8 Q15.4 5.8 15.4 8.8 Q15.4 10.6 13.3 11.8 Q12.2 12.5 12.2 14" fill="none" stroke="#fff" stroke-width="2.3"/>
<circle cx="12.2" cy="17.6" r="1.4" fill="#fff"/>
</svg>
<div class="t" style="left:424px;top:1317px;font-size:20.5px;color:#222">ヘルプカード</div>
<div class="t" style="left:2257px;top:1318px;font-size:19.5px;color:#1a70b8">X 閉じる</div>

<div class="t" style="left:378px;top:1378px;font-size:19.5px">設定状態</div>
<div class="t" style="left:378px;top:1438px;font-size:19.5px;letter-spacing:-0.47px"><b>ドラフト:</b> この状態では、設定は完全または不完全であることがあります。 管理者は後でこの状態への設定を展開することができます。</div>
<div class="t" style="left:378px;top:1502px;font-size:19.5px;letter-spacing:-0.42px"><b>ドラフト - ダウンロード中:</b> パッチのインストール サービスパックのインストールの設定が展開される毎に、設定で定義されたパッチ サービスパックはMicrosoftのWebサイトからダウンロードされ、それぞれの対象マシン</div>
<div class="t" style="left:378px;top:1534px;font-size:19.5px;letter-spacing:-0.52px">に適用される前にローカル的に保存されます。 この状態はパッチ サービスパックがダウンロード中であることを示します。</div>
<div class="t" style="left:378px;top:1597px;font-size:19.5px;letter-spacing:-0.54px"><b>実行する準備ができました:</b> 設定が正常に設定および展開されると、「実行準備完了」状態が表示されます。 ユーザーがログイン（ユーザーの設定の場合）またはPCが起動された場合（PC設定の場合）、定義された設定が</div>
<div class="t" style="left:378px;top:1631px;font-size:19.5px">適用されます。</div>

<!-- chat widget -->
<div class="a" style="left:2238px;top:1633px;width:130px;height:40px;background:#3592d9;border-radius:8px 0 0 0;box-shadow:0 -2px 8px rgba(0,0,0,0.18)"></div>
<div class="a" style="left:2248px;top:1642px;width:27px;height:20px;background:#fff;border-radius:2px"></div>
<div class="a" style="left:2254px;top:1649px;width:24px;height:14px;background:#fff;border:2px solid #5aa5e0"></div>
<div class="t" style="left:2299px;top:1645px;font-size:19.5px;color:#fff">ライブ</div>
</body>
</html>
